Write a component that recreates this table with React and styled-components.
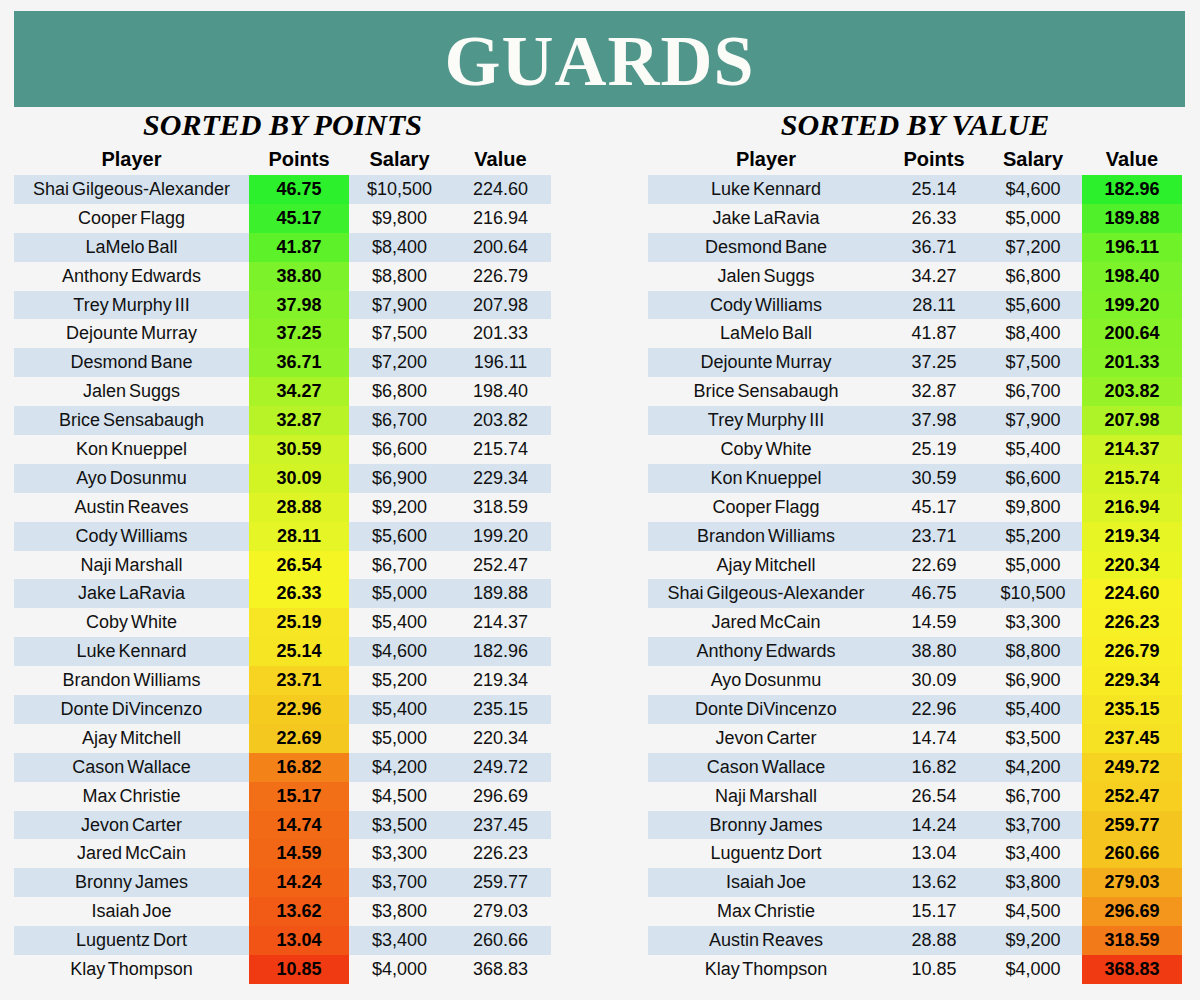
import React from "react";
import styled, { createGlobalStyle } from "styled-components";

const GlobalStyle = createGlobalStyle`
  html, body {
    margin: 0;
    padding: 0;
    background: #f5f5f5;
  }
  body {
    font-family: "Liberation Sans", Arial, sans-serif;
    color: #111;
  }
`;

const PLAYERS = [
  ["Shai Gilgeous-Alexander", 46.75, "$10,500", 224.6],
  ["Cooper Flagg", 45.17, "$9,800", 216.94],
  ["LaMelo Ball", 41.87, "$8,400", 200.64],
  ["Anthony Edwards", 38.8, "$8,800", 226.79],
  ["Trey Murphy III", 37.98, "$7,900", 207.98],
  ["Dejounte Murray", 37.25, "$7,500", 201.33],
  ["Desmond Bane", 36.71, "$7,200", 196.11],
  ["Jalen Suggs", 34.27, "$6,800", 198.4],
  ["Brice Sensabaugh", 32.87, "$6,700", 203.82],
  ["Kon Knueppel", 30.59, "$6,600", 215.74],
  ["Ayo Dosunmu", 30.09, "$6,900", 229.34],
  ["Austin Reaves", 28.88, "$9,200", 318.59],
  ["Cody Williams", 28.11, "$5,600", 199.2],
  ["Naji Marshall", 26.54, "$6,700", 252.47],
  ["Jake LaRavia", 26.33, "$5,000", 189.88],
  ["Coby White", 25.19, "$5,400", 214.37],
  ["Luke Kennard", 25.14, "$4,600", 182.96],
  ["Brandon Williams", 23.71, "$5,200", 219.34],
  ["Donte DiVincenzo", 22.96, "$5,400", 235.15],
  ["Ajay Mitchell", 22.69, "$5,000", 220.34],
  ["Cason Wallace", 16.82, "$4,200", 249.72],
  ["Max Christie", 15.17, "$4,500", 296.69],
  ["Jevon Carter", 14.74, "$3,500", 237.45],
  ["Jared McCain", 14.59, "$3,300", 226.23],
  ["Bronny James", 14.24, "$3,700", 259.77],
  ["Isaiah Joe", 13.62, "$3,800", 279.03],
  ["Luguentz Dort", 13.04, "$3,400", 260.66],
  ["Klay Thompson", 10.85, "$4,000", 368.83],
].map(([name, points, salary, value]) => ({ name, points, salary, value }));

const BY_VALUE = [...PLAYERS].sort((a, b) => a.value - b.value);

const RED = [240, 58, 18];
const YELLOW = [247, 245, 36];
const GREEN = [44, 240, 44];

const mix = (a, b, t) =>
  `rgb(${a.map((c, i) => Math.round(c + (b[i] - c) * t)).join(",")})`;

// excel style 3 colour scale, midpoint at the median
const heatColor = (v, list, lowIsGood) => {
  const sorted = [...list].sort((a, b) => a - b);
  const min = sorted[0];
  const max = sorted[sorted.length - 1];
  const n = sorted.length;
  const mid = (sorted[Math.floor((n - 1) / 2)] + sorted[Math.ceil((n - 1) / 2)]) / 2;
  const low = lowIsGood ? GREEN : RED;
  const high = lowIsGood ? RED : GREEN;
  if (v <= mid) return mix(low, YELLOW, (v - min) / (mid - min));
  return mix(YELLOW, high, (v - mid) / (max - mid));
};

const Table = ({ title, rows, heatKey, cols }) => {
  const all = rows.map((r) => r[heatKey]);
  return (
    <Section>
      <SectionTitle>{title}</SectionTitle>
      <HeadRow $cols={cols}>
        <HeadCell>Player</HeadCell>
        <HeadCell>Points</HeadCell>
        <HeadCell>Salary</HeadCell>
        <HeadCell>Value</HeadCell>
      </HeadRow>
      {rows.map((r, i) => (
        <Row key={r.name} $cols={cols} $striped={i % 2 === 0}>
          <Cell>{r.name}</Cell>
          {["points", "salary", "value"].map((k) => {
            const text = typeof r[k] === "number" ? r[k].toFixed(2) : r[k];
            if (k !== heatKey) return <Cell key={k}>{text}</Cell>;
            return (
              <HeatCell
                key={k}
                style={{ background: heatColor(r[k], all, heatKey === "value") }}
              >
                {text}
              </HeatCell>
            );
          })}
        </Row>
      ))}
    </Section>
  );
};

export default function App() {
  return (
    <>
      <GlobalStyle />
      <Page>
        <Banner>GUARDS</Banner>
        <Tables>
          <Table
            title="SORTED BY POINTS"
            rows={PLAYERS}
            heatKey="points"
            cols="235px 100px 101px 101px"
          />
          <Table
            title="SORTED BY VALUE"
            rows={BY_VALUE}
            heatKey="value"
            cols="236px 100px 98px 100px"
          />
        </Tables>
      </Page>
    </>
  );
}

const Page = styled.div`
  width: 1171px;
  padding: 11px 0 0 14px;
`;

const Banner = styled.div`
  height: 96px;
  background: #50968a;
  color: #fbfbf8;
  display: flex;
  align-items: center;
  justify-content: center;
  font-family: "Liberation Serif", "Times New Roman", serif;
  font-weight: 700;
  font-size: 72px;
  letter-spacing: 1px;
  padding-top: 4px;
  box-sizing: border-box;
`;

const Tables = styled.div`
  display: grid;
  grid-template-columns: 537px 534px;
  column-gap: 97px;
`;

const Section = styled.div`
  display: flex;
  flex-direction: column;
`;

const SectionTitle = styled.h2`
  margin: 0;
  height: 34px;
  line-height: 36px;
  text-align: center;
  font-family: "Liberation Serif", "Times New Roman", serif;
  font-style: italic;
  font-weight: 700;
  font-size: 30px;
  color: #000;
`;

const HeadRow = styled.div`
  display: grid;
  grid-template-columns: ${(p) => p.$cols};
  height: 34px;
`;

const HeadCell = styled.div`
  display: flex;
  align-items: center;
  justify-content: center;
  font-weight: 700;
  font-size: 20px;
  color: #000;
  padding-top: 2px;
`;

const Row = styled.div`
  display: grid;
  grid-template-columns: ${(p) => p.$cols};
  height: 28.9px;
  background: ${(p) => (p.$striped ? "#d6e3ef" : "transparent")};
`;

const Cell = styled.div`
  display: flex;
  align-items: center;
  justify-content: center;
  font-size: 18px;
  word-spacing: -2px;
  color: #111;
  white-space: nowrap;
`;

const HeatCell = styled(Cell)`
  font-weight: 700;
  color: #000;
`;
